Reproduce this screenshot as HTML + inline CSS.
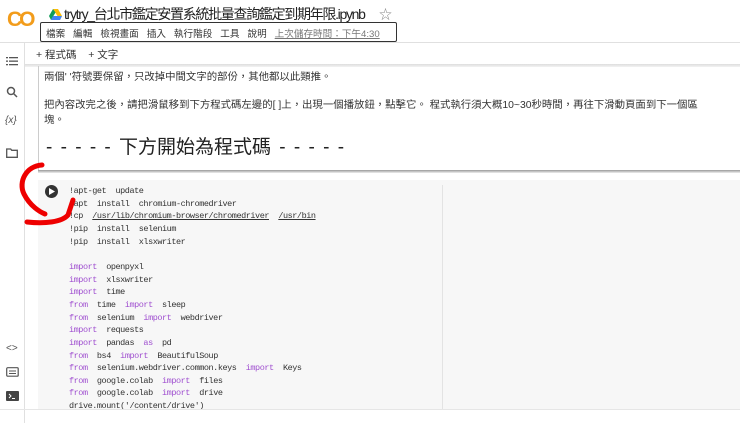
<!DOCTYPE html>
<html><head><meta charset="utf-8"><style>
*{margin:0;padding:0;box-sizing:border-box}
body{width:740px;height:423px;overflow:hidden;background:#fff;position:relative;font-family:"Liberation Sans","Noto Sans CJK TC",sans-serif;color:#212121}
.a{position:absolute;white-space:nowrap}
.code{font-family:"Liberation Mono","Noto Sans CJK TC",monospace;font-size:8.5px;letter-spacing:-0.45px;color:#333;position:absolute;left:69px;white-space:pre}
.k{color:#a050d0}
.u{text-decoration:underline}
.side svg{position:absolute;left:6px}
</style></head><body>
<div class="a" style="left:7px;top:8px;font-size:21px;font-weight:bold;color:#f29c1b;letter-spacing:-3px">CO</div>
<svg class="a" style="left:49px;top:9px" width="13" height="11" viewBox="0 0 13 11"><polygon points="4,0 9,0 13,7 11,11" fill="#fbbc04"/><polygon points="4,0 0,7 2,11 6.5,3.5" fill="#0f9d58"/><polygon points="2,11 11,11 13,7 4,7" fill="#4285f4"/></svg>
<div class="a" style="left:64px;top:4px;font-size:14px;letter-spacing:-1.3px;color:#222">trytry_台北市鑑定安置系統批量查詢鑑定到期年限.ipynb</div>
<div class="a" style="left:379px;top:4px;font-size:13px;color:#888">☆</div>
<div class="a" style="left:40px;top:22px;width:357px;height:20px;border:1.5px solid #333;border-radius:2px"></div>
<div class="a" style="left:46px;top:26px;font-size:9.6px;color:#333">檔案&nbsp;&nbsp;&nbsp;編輯&nbsp;&nbsp;&nbsp;檢視畫面&nbsp;&nbsp;&nbsp;插入&nbsp;&nbsp;&nbsp;執行階段&nbsp;&nbsp;&nbsp;工具&nbsp;&nbsp;&nbsp;說明&nbsp;&nbsp;&nbsp;<span style="color:#777;text-decoration:underline">上次儲存時間：下午4:30</span></div>
<div class="a" style="left:0;top:42px;width:740px;height:1px;background:#e0e0e0"></div>
<div class="a" style="left:24px;top:43px;width:1px;height:380px;background:#e0e0e0"></div>
<div class="side">
<svg style="top:56px" width="12" height="10"><g fill="#555"><rect x="0" y="1" width="2" height="1.3"/><rect x="3" y="1" width="9" height="1.3"/><rect x="0" y="4.5" width="2" height="1.3"/><rect x="3" y="4.5" width="9" height="1.3"/><rect x="0" y="8" width="2" height="1.3"/><rect x="3" y="8" width="9" height="1.3"/></g></svg>
<svg style="top:86px" width="12" height="12"><circle cx="5" cy="5" r="3.5" stroke="#555" stroke-width="1.5" fill="none"/><line x1="7.5" y1="7.5" x2="11" y2="11" stroke="#555" stroke-width="1.5"/></svg>
<div class="a" style="left:5px;top:115px;font-size:10px;color:#555;font-style:italic">{x}</div>
<svg style="top:148px" width="12" height="10"><path d="M0.7 1h4l1 1.3h5.6v7H0.7z" stroke="#555" stroke-width="1.3" fill="none"/></svg>
<div class="a" style="left:6px;top:343px;font-size:10px;color:#555">&lt;&gt;</div>
<svg style="top:367px" width="13" height="10"><rect x="0.7" y="0.7" width="11.5" height="8.5" rx="1" stroke="#555" stroke-width="1.2" fill="none"/><line x1="3" y1="4" x2="10" y2="4" stroke="#555"/><line x1="3" y1="6.5" x2="10" y2="6.5" stroke="#555"/></svg>
<svg style="top:391px" width="13" height="10"><rect width="13" height="10" rx="1" fill="#444"/><path d="M3 3l2 2-2 2" stroke="#fff" fill="none"/><line x1="6" y1="7.5" x2="9" y2="7.5" stroke="#fff"/></svg>
</div>
<div class="a" style="left:36px;top:47px;font-size:10.5px;color:#333">+ 程式碼&nbsp;&nbsp;&nbsp;&nbsp;+ 文字</div>
<div class="a" style="left:25px;top:64px;width:715px;height:3px;background:linear-gradient(#ddd,#f3f3f3)"></div>
<div class="a" style="left:38px;top:66px;width:1px;height:106px;background:#ccc"></div>
<div class="a" style="left:44px;top:68px;font-size:10.4px;color:#333">兩個' '符號要保留，只改掉中間文字的部份，其他都以此類推。</div>
<div class="a" style="left:44px;top:96px;font-size:10.4px;color:#333">把內容改完之後，請把滑鼠移到下方程式碼左邊的[ ]上，出現一個播放鈕，點擊它。 程式執行須大概10~30秒時間，再往下滑動頁面到下一個區</div>
<div class="a" style="left:44px;top:111px;font-size:10.4px;color:#333">塊。</div>
<div class="a" style="left:46px;top:132px;font-size:19px;color:#222;word-spacing:3px">- - - - - 下方開始為程式碼 - - - - -</div>
<div class="a" style="left:38px;top:170px;width:702px;height:3px;background:linear-gradient(#999,#eee)"></div>
<div class="a" style="left:38px;top:180px;width:702px;height:229px;background:#f7f7f7"></div>
<div class="a" style="left:442px;top:185px;width:1px;height:224px;background:#e3e3e3"></div>
<div class="a" style="left:0;top:409px;width:740px;height:1px;background:#e6e6e6"></div>
<div class="a" style="left:45px;top:185px;width:13px;height:13px;border-radius:50%;background:#333"></div>
<svg class="a" style="left:49px;top:188px" width="6" height="7"><polygon points="0,0 6,3.5 0,7" fill="#fff"/></svg>
<div class="code" style="top:186px">!apt-get  update</div>
<div class="code" style="top:199px">!apt  install  chromium-chromedriver</div>
<div class="code" style="top:211px">!cp  <span class="u">/usr/lib/chromium-browser/chromedriver</span>  <span class="u">/usr/bin</span></div>
<div class="code" style="top:224px">!pip  install  selenium</div>
<div class="code" style="top:237px">!pip  install  xlsxwriter</div>
<div class="code" style="top:262px"><span class="k">import</span>  openpyxl</div>
<div class="code" style="top:275px"><span class="k">import</span>  xlsxwriter</div>
<div class="code" style="top:287px"><span class="k">import</span>  time</div>
<div class="code" style="top:300px"><span class="k">from</span>  time  <span class="k">import</span>  sleep</div>
<div class="code" style="top:313px"><span class="k">from</span>  selenium  <span class="k">import</span>  webdriver</div>
<div class="code" style="top:325px"><span class="k">import</span>  requests</div>
<div class="code" style="top:338px"><span class="k">import</span>  pandas  <span class="k">as</span>  pd</div>
<div class="code" style="top:351px"><span class="k">from</span>  bs4  <span class="k">import</span>  BeautifulSoup</div>
<div class="code" style="top:363px"><span class="k">from</span>  selenium.webdriver.common.keys  <span class="k">import</span>  Keys</div>
<div class="code" style="top:376px"><span class="k">from</span>  google.colab  <span class="k">import</span>  files</div>
<div class="code" style="top:388px"><span class="k">from</span>  google.colab  <span class="k">import</span>  drive</div>
<div class="code" style="top:401px;height:8px;overflow:hidden">drive.mount('/content/drive')</div>
<svg class="a" style="left:0;top:160px" width="80" height="75"><path d="M42 5 C26 6 18 22 24 34 C30 46 40 52 45 54 M27 62 C45 64 62 62 68 55 L73 40" stroke="#e00" stroke-width="5" fill="none" stroke-linecap="round"/></svg>
</body></html>
